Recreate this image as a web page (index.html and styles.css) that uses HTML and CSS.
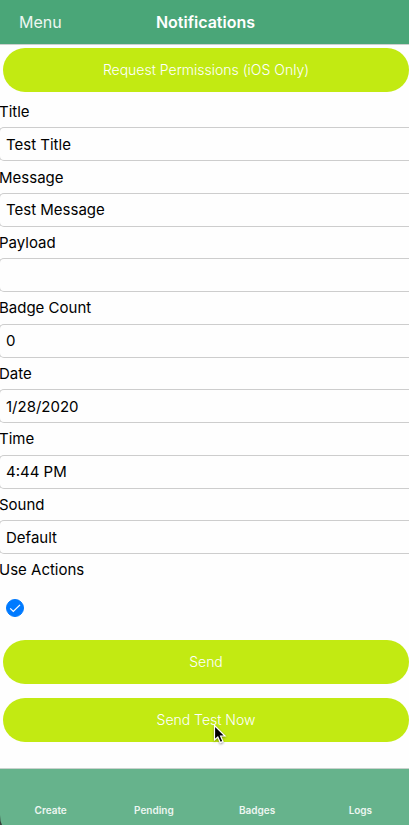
FILE: index.html
```html
<!DOCTYPE html>
<html lang="en">
<head>
<meta charset="utf-8">
<meta name="viewport" content="width=device-width, initial-scale=1">
<title>Notifications</title>
<link rel="stylesheet" href="styles.css">
</head>
<body>
<div class="screen">
  <header class="navbar">
    <button class="menu" type="button">Menu</button>
    <h1 class="title">Notifications</h1>
  </header>
  <main class="content">
    <button class="pill pill-first" type="button">Request Permissions (iOS Only)</button>
    <form class="form">
      <div class="fields">
        <div class="field"><label for="title">Title</label><input id="title" type="text" value="Test Title"></div>
        <div class="field"><label for="message">Message</label><input id="message" type="text" value="Test Message"></div>
        <div class="field"><label for="payload">Payload</label><input id="payload" type="text"></div>
        <div class="field"><label for="badge">Badge Count</label><input id="badge" type="text" inputmode="numeric" value="0"></div>
        <div class="field"><label for="date">Date</label><input id="date" type="text" value="1/28/2020"></div>
        <div class="field"><label for="time">Time</label><input id="time" type="text" value="4:44 PM"></div>
        <div class="field"><label for="sound">Sound</label><select id="sound"><option>Default</option></select></div>
      </div>
      <label class="check-label" for="actions">Use Actions</label>
      <div class="check-row">
        <span class="check">
          <input id="actions" type="checkbox" checked>
          <svg viewBox="0 0 18 18" aria-hidden="true"><path d="M4.2 9.4 7.3 12.4 14 5.9"/></svg>
        </span>
      </div>
      <div class="actions">
        <button class="pill" type="button">Send</button>
        <button class="pill" type="button">Send Test Now
          <svg class="pointer" viewBox="0 0 14 21" aria-hidden="true"><path d="M1.5 1.5V16L4.8 13 7.3 18.6 10 17.4 7.6 12H12Z"/></svg>
        </button>
      </div>
    </form>
  </main>
  <nav class="tabs">
    <a href="#create">Create</a>
    <a href="#pending">Pending</a>
    <a href="#badges">Badges</a>
    <a href="#logs">Logs</a>
    <svg class="bezel" viewBox="0 0 3 10" aria-hidden="true"><path d="M0 0H1Q1 6 3 10H0Z"/></svg>
  </nav>
</div>
</body>
</html>
```
FILE: styles.css
```css
* {
  box-sizing: border-box;
}

body {
  margin: 0;
  overflow-x: hidden;
  background: #fefefe;
  color: #000;
  font-family: Inter, "Liberation Sans", sans-serif;
  font-size: 15px;
}

button,
input,
select {
  margin: 0;
  font: inherit;
}

/* The screen runs slightly past both edges of the window. */
.screen {
  display: flex;
  flex-direction: column;
  min-height: 100vh;
  margin: 0 -3px 0 -1px;
}

.navbar {
  display: grid;
  grid-template-columns: 1fr auto 1fr;
  align-items: center;
  height: 45px;
  padding: 0 20px;
  background: #4aa678;
  border-bottom: 1px solid #cbd0cd;
  color: #fff;
}

.menu {
  justify-self: start;
  padding: 0;
  border: 0;
  background: none;
  color: #edf6f1;
  font-size: 16px;
}

.title {
  margin: 0;
  font-size: 16px;
  font-weight: 600;
}

.content,
.form {
  display: flex;
  flex: 1;
  flex-direction: column;
}

.pill {
  position: relative;
  height: 44px;
  margin: 0 3px 0 4px;
  padding: 0 6px 2px;
  border: 0;
  border-radius: 22px;
  background: #c2ea12;
  color: #fff;
  font-size: 14px;
  font-weight: 300;
}

.pill-first {
  margin: 3px 3px 4px 4px;
}

.fields {
  display: grid;
  flex: 1;
  grid-auto-rows: 1fr;
}

.field {
  display: flex;
  flex-direction: column;
}

.field label {
  display: flex;
  flex: 1;
  align-items: center;
}

.field input,
.field select {
  width: 100%;
  height: 34px;
  padding: 0 6px;
  appearance: none;
  border: 1px solid #cdcdcd;
  border-right: 0;
  border-radius: 5px 0 0 5px;
  background: #fefefe;
  color: #000;
}

.check-label {
  line-height: 32px;
}

.check-row {
  display: flex;
  align-items: center;
  height: 44px;
  padding-left: 7px;
}

.check {
  position: relative;
  width: 18px;
  height: 18px;
}

.check input {
  display: block;
  width: 18px;
  height: 18px;
  appearance: none;
  border: 1px solid #007aff;
  border-radius: 50%;
}

.check input:checked {
  background: #007aff;
}

.check svg {
  position: absolute;
  inset: 0;
  fill: none;
  stroke: #fff;
  stroke-width: 1.3;
  pointer-events: none;
}

.actions {
  display: flex;
  flex-direction: column;
  gap: 14px;
  padding: 10px 0 26px;
}

.pointer {
  position: absolute;
  top: 26px;
  left: calc(50% + 7px);
  width: 14px;
  height: 21px;
  fill: #000;
  stroke: #fff;
  stroke-width: 1.2;
  filter: drop-shadow(0 1px 1px rgb(0 0 0 / 40%));
}

.tabs {
  position: relative;
  display: grid;
  grid-template-columns: repeat(4, 1fr);
  align-items: end;
  height: 57px;
  padding-bottom: 9px;
  border-top: 1px solid #c9d2cd;
  background: #66b38c;
}

.tabs a {
  color: #edf6f1;
  font-size: 10px;
  font-weight: 600;
  line-height: 12px;
  text-align: center;
  text-decoration: none;
}

.bezel {
  position: absolute;
  bottom: 0;
  left: 0;
  width: 3px;
  height: 10px;
  fill: #38433d;
}
```
